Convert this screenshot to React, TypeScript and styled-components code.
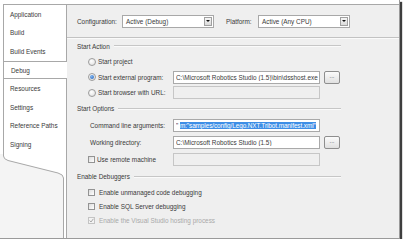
import React from "react";
import styled, { createGlobalStyle, css } from "styled-components";

const GlobalStyle = createGlobalStyle`
  html, body {
    margin: 0;
    padding: 0;
    background: #fff;
  }
  body {
    font-family: "Liberation Sans", Arial, sans-serif;
  }
`;

const Window = styled.div`
  width: 400px;
  height: 239px;
  box-sizing: border-box;
  padding-top: 4px;
  display: flex;
  background: #fff;
  border-right: 1px solid #9a9a9a;
  border-bottom: 1px solid #9a9a9a;
  box-shadow: 2px 2px 1px #3e3e3e;
  font-size: 6.4px;
  color: #3a3a3a;
`;

const TabColumn = styled.div`
  width: 66px;
  flex: none;
  display: flex;
  flex-direction: column;
`;

const TabList = styled.div`
  margin-left: 3px;
  border-left: 1px solid #a8a8a8;
  border-top: 1px solid #a8a8a8;
  background: #fff;
`;

const Tab = styled.div<{ $active?: boolean }>`
  height: 18.6px;
  box-sizing: border-box;
  display: flex;
  align-items: center;
  padding-left: 6px;
  white-space: nowrap;
  ${(p) =>
    p.$active &&
    css`
      position: relative;
      z-index: 1;
      margin-right: -1px;
      margin-left: -1px;
      padding-left: 7px;
      background: #fff;
      border-top: 1px solid #a8a8a8;
      border-bottom: 1px solid #a8a8a8;
      border-left: 1px solid #a8a8a8;
    `}
`;

const Curve = styled.svg`
  display: block;
  flex: none;
`;

const Filler = styled.div`
  flex: 1;
  display: flex;
`;

const FillerPanel = styled.div`
  width: 63px;
  background: #f4f4f4;
  border-right: 1px solid #a8a8a8;
`;

const Content = styled.div`
  flex: 1;
  background: #efefef;
  border-top: 1px solid #a8a8a8;
  border-left: 1px solid #a8a8a8;
  display: flex;
  flex-direction: column;
`;

const ConfigBar = styled.div`
  height: 32px;
  flex: none;
  display: flex;
  align-items: center;
  padding-left: 10px;
  border-bottom: 1px solid #c2c2c2;
  box-shadow: 0 1px 0 #fafafa;
`;

const ConfigLabel = styled.span<{ $w: number; $gap?: number }>`
  width: ${(p) => p.$w}px;
  margin-left: ${(p) => p.$gap ?? 0}px;
  flex: none;
`;

const Combo = styled.div`
  width: 92px;
  height: 13px;
  box-sizing: border-box;
  flex: none;
  display: flex;
  align-items: center;
  justify-content: space-between;
  padding-left: 3px;
  padding-right: 1px;
  background: #fff;
  border: 1px solid #a8a8a8;
`;

const ComboArrow = styled.span`
  width: 8px;
  height: 9px;
  box-sizing: border-box;
  border: 1px solid #a0a0a0;
  background: linear-gradient(#f6f6f6, #dadada);
  display: flex;
  align-items: center;
  justify-content: center;

  &::after {
    content: "";
    border-left: 2px solid transparent;
    border-right: 2px solid transparent;
    border-top: 2px solid #111;
  }
`;

const Body = styled.div`
  width: 264px;
  padding-left: 10px;
  display: flex;
  flex-direction: column;
`;

const SectionHeader = styled.div<{ $h: number }>`
  height: ${(p) => p.$h}px;
  display: flex;
  align-items: center;
  gap: 4px;

  &::after {
    content: "";
    flex: 1;
    border-top: 1px solid #c6c6c6;
    border-bottom: 1px solid #fafafa;
  }
`;

const Row = styled.div<{ $h: number }>`
  height: ${(p) => p.$h}px;
  display: flex;
  align-items: center;
  padding-left: 11px;
`;

const LabelCell = styled.div`
  width: 85px;
  flex: none;
  display: flex;
  align-items: center;
  gap: 2px;
  white-space: nowrap;
`;

const FieldLabel = styled.span<{ $disabled?: boolean }>`
  color: ${(p) => (p.$disabled ? "#a9a9a9" : "#3a3a3a")};
  white-space: nowrap;
`;

const PlainLabel = styled.span`
  padding-left: 2px;
`;

const Radio = styled.span<{ $checked?: boolean }>`
  width: 8px;
  height: 8px;
  box-sizing: border-box;
  flex: none;
  border-radius: 50%;
  border: 1px solid #9c9c9c;
  background: radial-gradient(circle at 40% 35%, #ffffff, #dcdcdc);
  display: flex;
  align-items: center;
  justify-content: center;

  ${(p) =>
    p.$checked &&
    css`
      &::after {
        content: "";
        width: 4px;
        height: 4px;
        border-radius: 50%;
        background: radial-gradient(circle at 40% 35%, #7fb4f0, #2160b8);
      }
    `}
`;

const Checkbox = styled.span<{ $disabled?: boolean }>`
  width: 7px;
  height: 7px;
  box-sizing: border-box;
  flex: none;
  border: 1px solid ${(p) => (p.$disabled ? "#c4c4c4" : "#939393")};
  background: ${(p) =>
    p.$disabled ? "#f3f3f3" : "linear-gradient(135deg, #dcdcdc, #ffffff)"};
  display: flex;
  align-items: center;
  justify-content: center;
`;

const TextBox = styled.div<{ $disabled?: boolean }>`
  width: 147px;
  height: 13px;
  box-sizing: border-box;
  flex: none;
  display: flex;
  align-items: center;
  padding-left: 2px;
  background: ${(p) => (p.$disabled ? "#efefef" : "#fff")};
  border: 1px solid ${(p) => (p.$disabled ? "#c6c6c6" : "#a9a9a9")};
`;

const TextValue = styled.span<{ $tight?: boolean }>`
  flex: 1;
  margin-right: 1px;
  overflow: hidden;
  white-space: nowrap;
  letter-spacing: ${(p) => (p.$tight ? "-0.08px" : "normal")};
`;

const Selected = styled.span`
  background: #3d8ee6;
  color: #fff;
`;

const BrowseButton = styled.div`
  width: 16px;
  height: 13px;
  box-sizing: border-box;
  margin-left: 4px;
  flex: none;
  border: 1px solid #8e8e8e;
  border-radius: 2px;
  background: linear-gradient(#fbfbfb, #e0e0e0);
  display: flex;
  align-items: center;
  justify-content: center;
  font-size: 6px;
  line-height: 1;
  padding-bottom: 2px;
`;

const CheckRow = styled.div<{ $h: number }>`
  height: ${(p) => p.$h}px;
  display: flex;
  align-items: center;
  gap: 4px;
  padding-left: 11px;
`;

const tabs = [
  "Application",
  "Build",
  "Build Events",
  "Debug",
  "Resources",
  "Settings",
  "Reference Paths",
  "Signing",
];

const Tick = () => (
  <svg width="5" height="5" viewBox="0 0 5 5">
    <path d="M0.6 2.5 L2 4 L4.4 0.8" fill="none" stroke="#a8a8a8" strokeWidth="1" />
  </svg>
);

const App: React.FC = () => {
  const curve =
    "M3.5 0 L3.5 2 Q3.5 5 8 6.5 L58 19 Q63.5 20.5 63.5 24";

  return (
    <>
      <GlobalStyle />
      <Window>
        <TabColumn>
          <TabList>
            {tabs.map((t) => (
              <Tab key={t} $active={t === "Debug"}>
                {t}
              </Tab>
            ))}
          </TabList>
          <Curve width="66" height="24" viewBox="0 0 66 24">
            <rect x="0" y="0" width="66" height="24" fill="#f4f4f4" />
            <path d={`${curve} L66 24 L66 0 Z`} fill="#fff" />
            <path d={curve} fill="none" stroke="#a8a8a8" strokeWidth="1" />
          </Curve>
          <Filler>
            <FillerPanel />
          </Filler>
        </TabColumn>

        <Content>
          <ConfigBar>
            <ConfigLabel $w={45}>Configuration:</ConfigLabel>
            <Combo>
              <span>Active (Debug)</span>
              <ComboArrow />
            </Combo>
            <ConfigLabel $w={32} $gap={12}>
              Platform:
            </ConfigLabel>
            <Combo>
              <span>Active (Any CPU)</span>
              <ComboArrow />
            </Combo>
          </ConfigBar>

          <Body>
            <SectionHeader $h={16}>Start Action</SectionHeader>
            <Row $h={15.5}>
              <LabelCell>
                <Radio />
                <FieldLabel>Start project</FieldLabel>
              </LabelCell>
            </Row>
            <Row $h={15.5}>
              <LabelCell>
                <Radio $checked />
                <FieldLabel>Start external program:</FieldLabel>
              </LabelCell>
              <TextBox>
                <TextValue>{"C:\\Microsoft Robotics Studio (1.5)\\bin\\dsshost.exe"}</TextValue>
              </TextBox>
              <BrowseButton>...</BrowseButton>
            </Row>
            <Row $h={15.5}>
              <LabelCell>
                <Radio />
                <FieldLabel>Start browser with URL:</FieldLabel>
              </LabelCell>
              <TextBox $disabled />
            </Row>

            <SectionHeader $h={16}>Start Options</SectionHeader>
            <Row $h={17}>
              <LabelCell>
                <PlainLabel>Command line arguments:</PlainLabel>
              </LabelCell>
              <TextBox>
                <TextValue $tight>
                  {'" '}
                  <Selected>{'m:"samples/config/Lego.NXT.Tribot.manifest.xml"'}</Selected>
                </TextValue>
              </TextBox>
            </Row>
            <Row $h={17}>
              <LabelCell>
                <PlainLabel>Working directory:</PlainLabel>
              </LabelCell>
              <TextBox>
                <TextValue>{"C:\\Microsoft Robotics Studio (1.5)"}</TextValue>
              </TextBox>
              <BrowseButton>...</BrowseButton>
            </Row>
            <Row $h={17}>
              <LabelCell>
                <Checkbox />
                <FieldLabel>Use remote machine</FieldLabel>
              </LabelCell>
              <TextBox $disabled />
            </Row>

            <SectionHeader $h={18}>Enable Debuggers</SectionHeader>
            <CheckRow $h={14}>
              <Checkbox />
              <FieldLabel>Enable unmanaged code debugging</FieldLabel>
            </CheckRow>
            <CheckRow $h={14}>
              <Checkbox />
              <FieldLabel>Enable SQL Server debugging</FieldLabel>
            </CheckRow>
            <CheckRow $h={14}>
              <Checkbox $disabled>
                <Tick />
              </Checkbox>
              <FieldLabel $disabled>Enable the Visual Studio hosting process</FieldLabel>
            </CheckRow>
          </Body>
        </Content>
      </Window>
    </>
  );
};

export default App;
